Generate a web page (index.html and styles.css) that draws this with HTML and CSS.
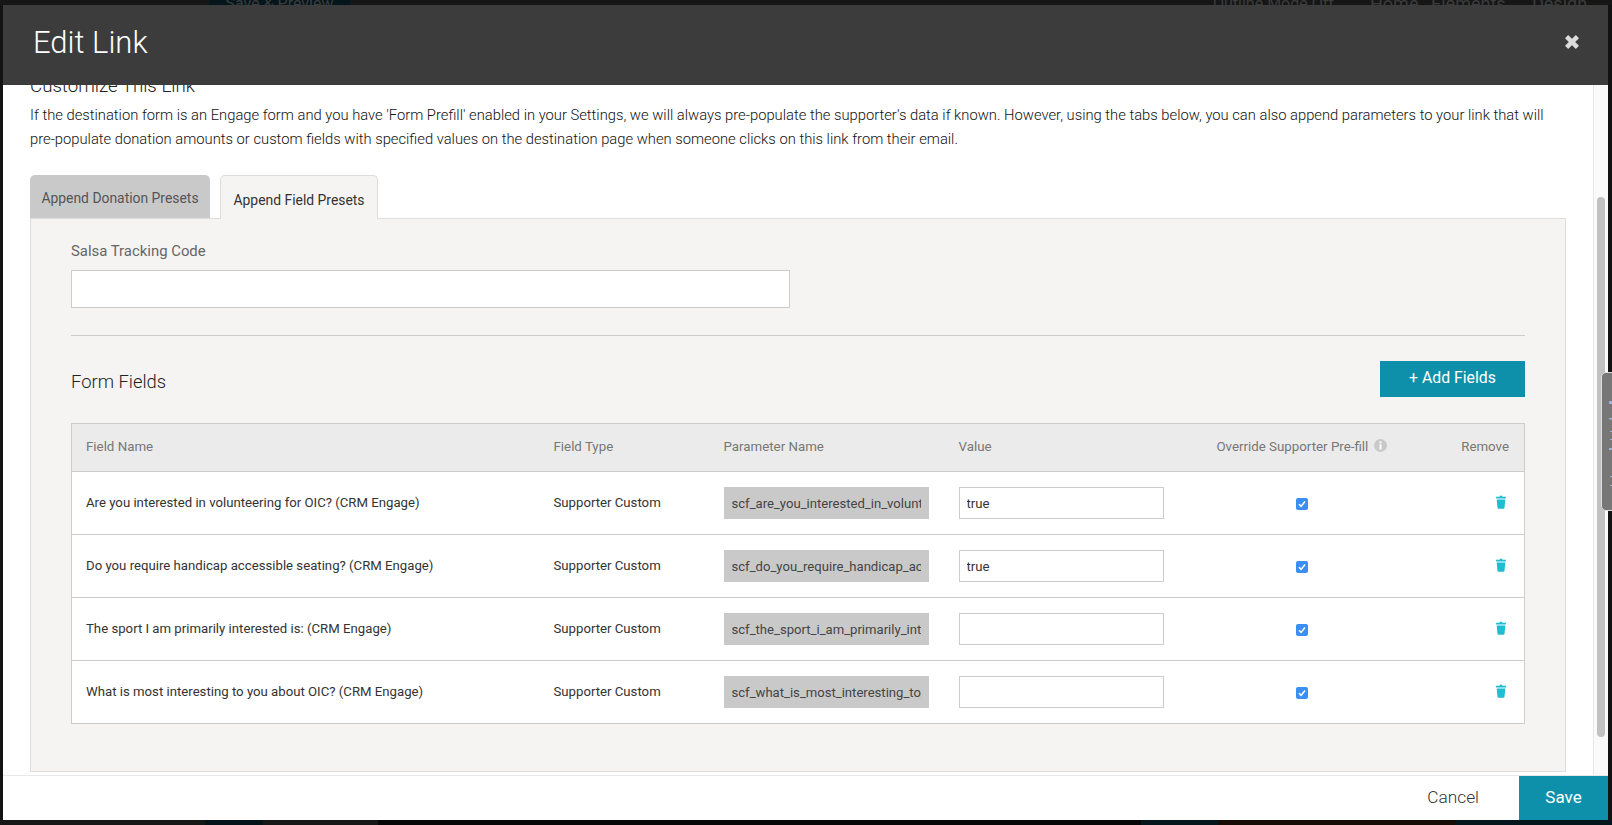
FILE: index.html
```html
<!DOCTYPE html>
<html lang="en">
<head>
  <meta charset="UTF-8">
  <title>Edit Link</title>
  <link rel="stylesheet" href="styles.css">
</head>
<body>
  <div class="behind-top">
    <div class="behind-btn">Save &amp; Preview</div>
    <div class="behind-mode">Outline Mode Off</div>
    <div class="behind-nav nav-home">Home</div>
    <div class="behind-nav nav-elements">Elements</div>
    <div class="behind-nav">Design</div>
  </div>
  <div class="behind-bottom">
    <div class="seg seg-grey"></div>
    <div class="seg seg-teal-a"></div>
    <div class="seg seg-grey-b"></div>
    <div class="seg seg-black"></div>
    <div class="seg seg-teal-b"></div>
    <div class="seg seg-brown"></div>
    <div class="seg seg-teal-c"></div>
  </div>

  <div class="modal">
    <div class="modal-header">
      <h1>Edit Link</h1>
      <svg class="close" viewBox="0 0 16 16" width="16" height="16"><path d="M2.6 2.6 13.4 13.4M13.4 2.6 2.6 13.4" stroke="#dcdcdc" stroke-width="4.4"/></svg>
    </div>

    <div class="modal-body">
      <div class="scroll-content">
        <h2 class="customize">Customize This Link</h2>
        <p class="intro">If the destination form is an Engage form and you have 'Form Prefill' enabled in your Settings, we will always pre-populate the supporter's data if known. However, using the tabs below, you can also append parameters to your link that will pre-populate donation amounts or custom fields with specified values on the destination page when someone clicks on this link from their email.</p>

        <div class="tabs">
          <div class="tab">Append Donation Presets</div>
          <div class="tab active">Append Field Presets</div>
        </div>

        <div class="panel">
          <label class="field-label">Salsa Tracking Code</label>
          <input class="tracking-input" type="text">
          <div class="divider"></div>

          <div class="fields-head">
            <h3>Form Fields</h3>
            <button class="add-btn">+ Add Fields</button>
          </div>

          <table class="fields">
            <colgroup>
              <col class="c-name"><col class="c-type"><col class="c-param"><col class="c-value"><col class="c-over"><col class="c-remove">
            </colgroup>
            <thead>
              <tr>
                <th>Field Name</th>
                <th>Field Type</th>
                <th>Parameter Name</th>
                <th>Value</th>
                <th class="center">Override Supporter Pre-fill
                  <svg class="info" viewBox="0 0 13 13" width="13" height="13"><circle cx="6.5" cy="6.5" r="6.5" fill="#c9c9c9"/><rect x="5.5" y="2.4" width="2" height="2" fill="#fff"/><rect x="5.5" y="5.4" width="2" height="5" fill="#fff"/></svg>
                </th>
                <th class="right">Remove</th>
              </tr>
            </thead>
            <tbody>
              <tr>
                <td>Are you interested in volunteering for OIC? (CRM Engage)</td>
                <td>Supporter Custom</td>
                <td><input class="param" type="text" readonly value="scf_are_you_interested_in_volunteering_for_oic"></td>
                <td><input class="value-input" type="text" value="true"></td>
                <td class="center"><span class="check"><svg viewBox="0 0 12 12" width="12" height="12"><path d="M3 6.2 5.1 8.4 9 3.6" fill="none" stroke="#fff" stroke-width="1.6"/></svg></span></td>
                <td class="right"><svg class="trash" viewBox="0 0 10 14" width="10" height="14"><path d="M3.4 1.7Q5 -.9 6.6 1.7H9.9V3.6H.1V1.7ZM.7 4.6H9.3L8.5 12.8Q8.4 13.7 7.4 13.7H2.6Q1.6 13.7 1.5 12.8Z" fill="#1fbcd2"/></svg></td>
              </tr>
              <tr>
                <td>Do you require handicap accessible seating? (CRM Engage)</td>
                <td>Supporter Custom</td>
                <td><input class="param" type="text" readonly value="scf_do_you_require_handicap_accessible_seating"></td>
                <td><input class="value-input" type="text" value="true"></td>
                <td class="center"><span class="check"><svg viewBox="0 0 12 12" width="12" height="12"><path d="M3 6.2 5.1 8.4 9 3.6" fill="none" stroke="#fff" stroke-width="1.6"/></svg></span></td>
                <td class="right"><svg class="trash" viewBox="0 0 10 14" width="10" height="14"><path d="M3.4 1.7Q5 -.9 6.6 1.7H9.9V3.6H.1V1.7ZM.7 4.6H9.3L8.5 12.8Q8.4 13.7 7.4 13.7H2.6Q1.6 13.7 1.5 12.8Z" fill="#1fbcd2"/></svg></td>
              </tr>
              <tr>
                <td>The sport I am primarily interested is: (CRM Engage)</td>
                <td>Supporter Custom</td>
                <td><input class="param" type="text" readonly value="scf_the_sport_i_am_primarily_interested_is"></td>
                <td><input class="value-input" type="text"></td>
                <td class="center"><span class="check"><svg viewBox="0 0 12 12" width="12" height="12"><path d="M3 6.2 5.1 8.4 9 3.6" fill="none" stroke="#fff" stroke-width="1.6"/></svg></span></td>
                <td class="right"><svg class="trash" viewBox="0 0 10 14" width="10" height="14"><path d="M3.4 1.7Q5 -.9 6.6 1.7H9.9V3.6H.1V1.7ZM.7 4.6H9.3L8.5 12.8Q8.4 13.7 7.4 13.7H2.6Q1.6 13.7 1.5 12.8Z" fill="#1fbcd2"/></svg></td>
              </tr>
              <tr>
                <td>What is most interesting to you about OIC? (CRM Engage)</td>
                <td>Supporter Custom</td>
                <td><input class="param" type="text" readonly value="scf_what_is_most_interesting_to_you_about_oic"></td>
                <td><input class="value-input" type="text"></td>
                <td class="center"><span class="check"><svg viewBox="0 0 12 12" width="12" height="12"><path d="M3 6.2 5.1 8.4 9 3.6" fill="none" stroke="#fff" stroke-width="1.6"/></svg></span></td>
                <td class="right"><svg class="trash" viewBox="0 0 10 14" width="10" height="14"><path d="M3.4 1.7Q5 -.9 6.6 1.7H9.9V3.6H.1V1.7ZM.7 4.6H9.3L8.5 12.8Q8.4 13.7 7.4 13.7H2.6Q1.6 13.7 1.5 12.8Z" fill="#1fbcd2"/></svg></td>
              </tr>
            </tbody>
          </table>
        </div>
      </div>
      <div class="scroll-track"><div class="scroll-thumb"></div></div>
    </div>

    <div class="modal-footer">
      <a class="cancel">Cancel</a>
      <button class="save">Save</button>
    </div>
  </div>

  <div class="side-handle">
    <svg class="handle-specks" viewBox="0 0 4 139" width="4" height="139"><path d="M1 28h3v3H1ZM1 45h3v1.500H1ZM2 58h2v1H2ZM2 66h2v1H2ZM1 75h3v2H1ZM2 103h2v1H2ZM2 112h2v1H2Z" fill="#9db2e0"/></svg>
  </div>
</body>
</html>
```

FILE: styles.css
```css
html, body {
  margin: 0;
  height: 825px;
  overflow: hidden;
  background: #121212;
  font-family: Roboto, "Liberation Sans", sans-serif;
  color: #333;
}
.behind-top {
  display: flex;
  height: 5px;
  overflow: hidden;
  font-size: 16px;
  line-height: 8px;
  color: #3c3c3c;
  background: #161616;
}
.behind-btn {
  width: 141px;
  margin-left: 209px;
  height: 5px;
  background: #04151c;
  text-align: center;
}
.behind-mode {
  margin-left: 863px;
  width: 157px;
}
.behind-nav { font-size: 18px; }
.nav-home { width: 61px; }
.nav-elements { width: 101px; }
.behind-bottom {
  position: absolute;
  left: 0;
  right: 0;
  bottom: 0;
  height: 5px;
  display: flex;
}
.seg-grey { width: 205px; background: #161616; }
.seg-teal-a { width: 58px; background: #04121a; }
.seg-grey-b { width: 115px; background: #161616; }
.seg-black { width: 763px; background: #060606; }
.seg-teal-b { width: 77px; background: #04151c; }
.seg-brown { width: 237px; background: #170c05; }
.seg-teal-c { width: 157px; background: #04151c; }

.modal {
  position: absolute;
  top: 5px;
  left: 3px;
  right: 4px;
  bottom: 5px;
  display: flex;
  flex-direction: column;
  background: #fff;
}
.modal-header {
  height: 80px;
  flex: none;
  display: flex;
  align-items: center;
  justify-content: space-between;
  box-sizing: border-box;
  padding: 0 28px 6px 30px;
  background: #3c3c3c;
}
.modal-header h1 {
  margin: 0;
  font-size: 31px;
  font-weight: 300;
  color: #fff;
}
.close { flex: none; }
.modal-body {
  flex: 1;
  display: flex;
  min-height: 0;
}
.scroll-content {
  flex: 1;
  min-width: 0;
  padding: 0 27px;
  overflow: hidden;
}
.scroll-track {
  flex: none;
  padding: 112px 3px 0 3px;
  box-sizing: border-box;
  width: 15px;
  background: #fafafa;
  border-left: 1px solid #e8e8e8;
}
.scroll-thumb {
  height: 540px;
  width: 8px;
  border-radius: 4px;
  background: #c1c1c1;
}
.customize {
  margin: -9px 0 0;
  height: 20px;
  font-size: 18.7px;
  line-height: 20px;
  font-weight: 300;
  color: #222;
}
.intro {
  margin: 8px 0 0;
  font-size: 14.75px;
  line-height: 23.5px;
  font-weight: 300;
  color: #111;
}
.tabs {
  display: flex;
  gap: 10px;
  margin-top: 24px;
  align-items: flex-start;
}
.tab {
  width: 180px;
  height: 43px;
  box-sizing: border-box;
  padding-top: 15px;
  font-size: 13.9px;
  line-height: 16px;
  text-align: center;
  color: #555;
  background: #c9c9c9;
  border-radius: 5px 5px 0 0;
}
.tab.active {
  position: relative;
  width: 158px;
  height: 44px;
  margin-bottom: -1px;
  padding-top: 16px;
  color: #333;
  background: #f5f4f2;
  border: 1px solid #ddd;
  border-bottom: 0;
}
.panel {
  height: 554px;
  box-sizing: border-box;
  padding: 24px 40px 0;
  background: #f5f4f2;
  border: 1px solid #ddd;
}
.field-label {
  display: block;
  font-size: 14.9px;
  line-height: 16px;
  color: #666;
}
.tracking-input {
  display: block;
  width: 719px;
  height: 38px;
  margin-top: 11px;
  box-sizing: border-box;
  background: #fff;
  border: 1px solid #ccc;
}
.divider {
  margin-top: 27px;
  border-top: 1px solid #ccc;
}
.fields-head {
  display: flex;
  align-items: center;
  justify-content: space-between;
  margin-top: 25px;
}
.fields-head h3 {
  margin: 4px 0 0;
  font-size: 18.4px;
  font-weight: 300;
  color: #222;
}
.add-btn {
  width: 145px;
  height: 36px;
  border: none;
  padding: 0 0 3px;
  background: #0f90aa;
  color: #fff;
  font-family: inherit;
  font-size: 15.8px;
}
.fields {
  width: 1453px;
  margin-top: 26px;
  table-layout: fixed;
  border-collapse: collapse;
  background: #fff;
  font-size: 13.2px;
  color: #333;
}
.c-name { width: 467px; }
.c-type { width: 170px; }
.c-param { width: 235px; }
.c-value { width: 234px; }
.c-over { width: 248px; }
.c-remove { width: 99px; }
.fields th, .fields td {
  padding: 0 15px;
  text-align: left;
  border: 1px solid #ccc;
  border-left: 0;
  border-right: 0;
  white-space: nowrap;
}
.fields tr > :first-child {
  padding-left: 14px;
  border-left: 1px solid #ccc;
}
.fields tr > :last-child { border-right: 1px solid #ccc; }
.fields th {
  height: 48px;
  box-sizing: border-box;
  padding-bottom: 2px;
  background: #ebebeb;
  font-size: 13.3px;
  font-weight: 400;
  color: #777;
}
.fields td {
  height: 63px;
  box-sizing: border-box;
}
.fields td:nth-child(-n+2) { padding-bottom: 2px; }
.fields .center { text-align: center; }
.fields .right { text-align: right; }
.info {
  margin-left: 2px;
  vertical-align: -1px;
}
.param {
  display: block;
  width: 205px;
  height: 32px;
  box-sizing: border-box;
  padding: 0 8px;
  border: none;
  outline: none;
  background: #c9c9c9;
  font-family: inherit;
  font-size: 13.1px;
  color: #444;
}
.value-input {
  display: block;
  width: 205px;
  height: 32px;
  box-sizing: border-box;
  padding: 0 7px;
  border: 1px solid #ccc;
  background: #fff;
  font-family: inherit;
  font-size: 13.2px;
  color: #333;
}
.check {
  display: inline-block;
  width: 12px;
  height: 12px;
  vertical-align: middle;
  border-radius: 2px;
  background: #3b8ef3;
}
.check svg { display: block; }
.trash {
  display: block;
  margin: -3px 3px 0 auto;
}
.modal-footer {
  height: 45px;
  flex: none;
  display: flex;
  align-items: stretch;
  justify-content: flex-end;
  box-sizing: border-box;
  border-top: 1px solid #e8e8e8;
}
.cancel {
  align-self: center;
  margin: 0 40px 3px 0;
  font-size: 17.3px;
  font-weight: 300;
  color: #333;
}
.save {
  width: 89px;
  border: none;
  padding: 0 0 3px;
  background: #0f90aa;
  color: #fff;
  font-family: inherit;
  font-size: 17px;
}
.side-handle {
  position: absolute;
  top: 372px;
  left: 1601px;
  right: -4px;
  height: 139px;
  box-sizing: border-box;
  background: #777;
  border: 1px solid #ddd;
  border-radius: 5px;
}
.handle-specks {
  display: block;
  margin-left: 6px;
}
```
